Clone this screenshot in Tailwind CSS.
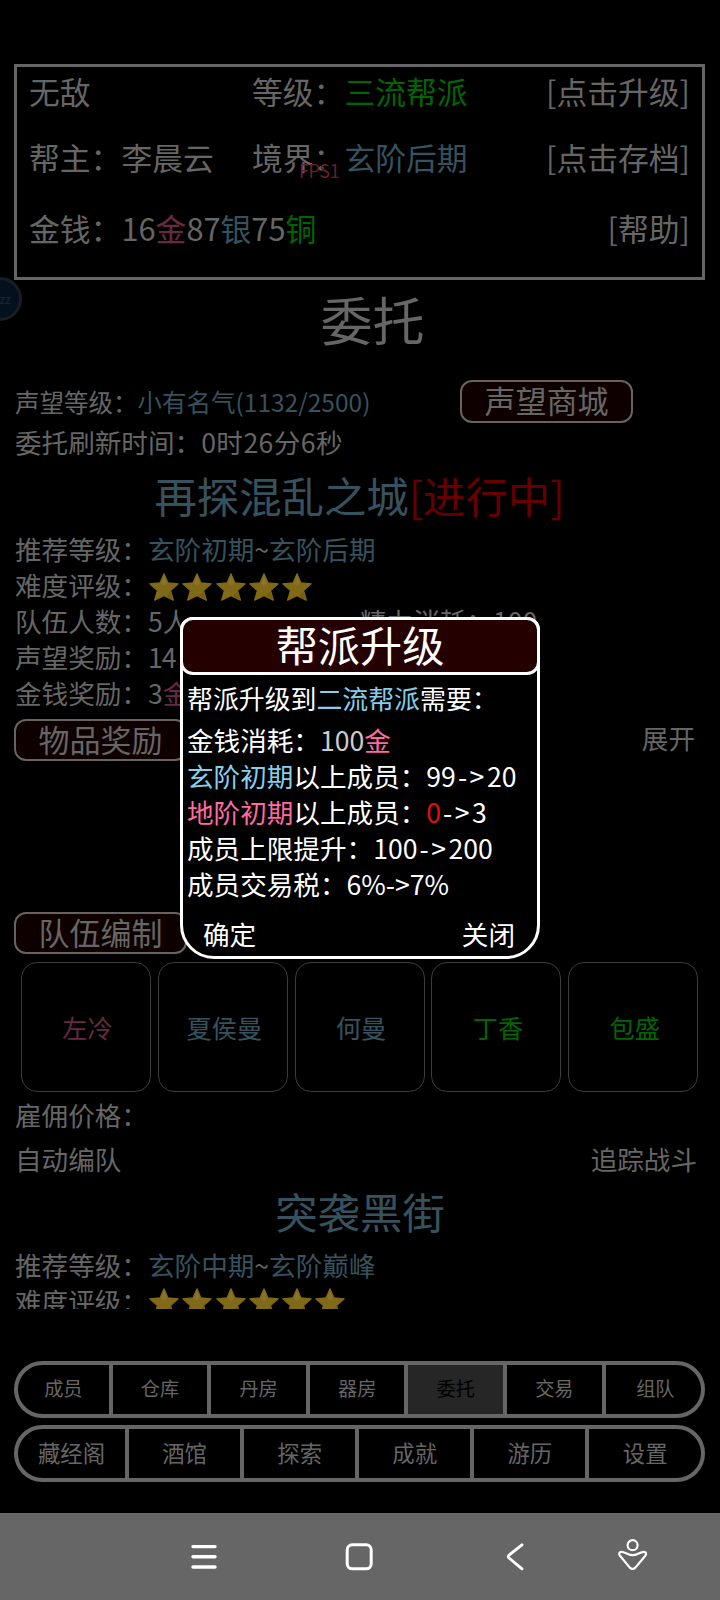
<!DOCTYPE html>
<html lang="zh-CN">
<head>
<meta charset="utf-8">
<title>帮派</title>
<script src="https://cdn.jsdelivr.net/npm/@tailwindcss/browser@4"></script>
</head>
<body class="bg-black">
<svg width="0" height="0" class="absolute">
  <defs>
    <symbol id="star" viewBox="0 0 30 28">
      <path d="M15 .8 18.9 9.8 29.2 10.8 21.6 17.6 24.4 27.2 15 22.6 5.6 27.2 8.4 17.6 .8 10.8 11.1 9.8z" fill="#806a17" stroke="#806a17" stroke-width="1.2" stroke-linejoin="round"/>
      <path d="M15 2 18 10.4 15 12.5 12 10.4z" fill="#89742b"/>
      <path d="M21.6 18.4 24 26.8 17 23z" fill="#73600f"/>
    </symbol>
  </defs>
</svg>
<div class="relative flex h-[1600px] w-[720px] flex-col overflow-hidden bg-black font-['Noto_Sans_CJK_SC',sans-serif] text-[26.6px] leading-none whitespace-nowrap text-[#666]">

  <header class="mr-[15px] ml-[14px] mt-16 flex h-[216px] shrink-0 flex-col border-3 border-[#666] pt-[1px] pr-[12px] pl-[12px] text-[30.8px]">
    <div class="flex h-[46.6px] items-center">
      <span class="w-[223px]">无敌</span>
      <span>等级：<span class="text-[#006600]">三流帮派</span></span>
      <span class="ml-auto">[点击升级]</span>
    </div>
    <div class="flex h-[84.8px] items-center">
      <span class="w-[223px]">帮主：李晨云</span>
      <span>境界：<span class="text-[#36525e]">玄阶后期</span></span>
      <span class="ml-auto">[点击存档]</span>
    </div>
    <div class="flex h-[58.4px] items-center">
      <span>金钱：16<span class="text-[#662a44]">金</span>87<span class="text-[#36525e]">银</span>75<span class="text-[#006600]">铜</span></span>
      <span class="ml-auto">[帮助]</span>
    </div>
  </header>

  <main class="flex h-[1029px] shrink-0 flex-col overflow-hidden pr-[14px] pl-[15px]">
    <h1 class="flex h-[78px] shrink-0 items-center justify-center pl-[26px] text-[52px]"><span class="w-[130px] pl-[12px]">委托</span></h1>
    <div class="mt-[18px] flex h-[52px] shrink-0 items-center text-[24.5px]">
      <span class="w-[445px]">声望等级：<span class="text-[#36525e]">小有名气(1132/2500)</span></span>
      <span class="-mt-[2px] flex h-[43px] w-[173px] items-center justify-center rounded-[12px] border-2 border-[#6a6262] bg-[#0f0000] pb-[4px] text-[31px]">声望商城</span>
    </div>
    <div class="flex h-[29px] shrink-0 items-center">委托刷新时间：<span class="tracking-[0.45px]">0时26分6秒</span></div>
    <h2 class="-ml-[2px] flex h-[74.5px] shrink-0 items-center justify-center pt-[2px] text-[42.4px] text-[#36525e]">再探混乱之城<span class="text-[#660000]">[进行中]</span></h2>
    <div class="flex h-9 shrink-0 items-center">推荐等级：<span class="text-[#36525e]">玄阶初期</span>~<span class="text-[#36525e]">玄阶后期</span></div>
    <div class="flex h-9 shrink-0 items-center">难度评级：
      <span class="mt-[2px] ml-[1px] flex gap-[3.3px]">
        <svg class="h-7 w-[30px]"><use href="#star"/></svg><svg class="h-7 w-[30px]"><use href="#star"/></svg><svg class="h-7 w-[30px]"><use href="#star"/></svg><svg class="h-7 w-[30px]"><use href="#star"/></svg><svg class="h-7 w-[30px]"><use href="#star"/></svg>
      </span>
    </div>
    <div class="flex h-9 shrink-0 items-center"><span class="w-[345px]">队伍人数：5人</span><span>精力消耗：100</span></div>
    <div class="flex h-9 shrink-0 items-center">声望奖励：<span class="tracking-[-1px]">14</span></div>
    <div class="flex h-9 shrink-0 items-center">金钱奖励：3<span class="text-[#662a44]">金</span></div>
    <div class="mt-[7.5px] -ml-px flex h-[42px] shrink-0 items-center justify-between pr-[11px]">
      <span class="flex h-full w-[173px] items-center justify-center rounded-[12px] border-2 border-[#6a6262] bg-[#0f0000] pb-[4px] text-[31px]">物品奖励</span>
      <span class="pb-[3px]">展开</span>
    </div>
    <div class="mt-[151px] -ml-px flex h-[42px] shrink-0 items-center">
      <span class="flex h-full w-[173px] items-center justify-center rounded-[12px] border-2 border-[#6a6262] bg-[#0f0000] pb-[4px] text-[31px]">队伍编制</span>
    </div>
    <div class="mt-2 ml-[6px] flex shrink-0 gap-[6.8px] text-[25.2px]">
      <span class="flex size-[130px] items-center justify-center rounded-[16px] border border-[#3c3c3c] pt-[2px] pl-[3px] text-[#662a44]">左冷</span>
      <span class="flex size-[130px] items-center justify-center rounded-[16px] border border-[#3c3c3c] pt-[2px] pl-[3px] text-[#36525e]">夏侯曼</span>
      <span class="flex size-[130px] items-center justify-center rounded-[16px] border border-[#3c3c3c] pt-[2px] pl-[3px] text-[#36525e]">何曼</span>
      <span class="flex size-[130px] items-center justify-center rounded-[16px] border border-[#3c3c3c] pt-[2px] pl-[3px] text-[#006600]">丁香</span>
      <span class="flex size-[130px] items-center justify-center rounded-[16px] border border-[#3c3c3c] pt-[2px] pl-[3px] text-[#006600]">包盛</span>
    </div>
    <div class="flex h-[47px] shrink-0 items-center">雇佣价格：</div>
    <div class="flex h-[40px] shrink-0 items-center justify-between pr-[9px]"><span>自动编队</span><span>追踪战斗</span></div>
    <h2 class="mb-1 -ml-px flex h-[64px] shrink-0 items-center justify-center text-[42.4px] text-[#36525e]">突袭黑街</h2>
    <div class="flex h-9 shrink-0 items-center">推荐等级：<span class="text-[#36525e]">玄阶中期</span>~<span class="text-[#36525e]">玄阶巅峰</span></div>
    <div class="flex h-9 shrink-0 items-center">难度评级：
      <span class="mt-[2px] ml-[1px] flex gap-[3.3px]">
        <svg class="h-7 w-[30px]"><use href="#star"/></svg><svg class="h-7 w-[30px]"><use href="#star"/></svg><svg class="h-7 w-[30px]"><use href="#star"/></svg><svg class="h-7 w-[30px]"><use href="#star"/></svg><svg class="h-7 w-[30px]"><use href="#star"/></svg><svg class="h-7 w-[30px]"><use href="#star"/></svg>
      </span>
    </div>
  </main>

  <nav class="mr-[15px] ml-[14px] mt-[52px] flex shrink-0 flex-col gap-[7px]">
    <div class="grid h-[57px] grid-cols-[94.7px_repeat(5,98.6px)_1fr] divide-x-4 divide-[#666] overflow-hidden rounded-full border-4 border-[#666] text-[19.2px]">
      <span class="flex items-center justify-center pb-[1px]">成员</span>
      <span class="flex items-center justify-center pb-[1px]">仓库</span>
      <span class="flex items-center justify-center pb-[1px]">丹房</span>
      <span class="flex items-center justify-center pb-[1px]">器房</span>
      <span class="flex items-center justify-center bg-[#262626] pb-[1px] text-black">委托</span>
      <span class="flex items-center justify-center pb-[1px]">交易</span>
      <span class="flex items-center justify-center pb-[1px] pl-[4px]">组队</span>
    </div>
    <div class="grid h-[57px] grid-cols-[111px_repeat(4,115.1px)_1fr] divide-x-4 divide-[#666] overflow-hidden rounded-full border-4 border-[#666] text-[22.4px]">
      <span class="flex items-center justify-center pb-[3px]">藏经阁</span>
      <span class="flex items-center justify-center pb-[3px]">酒馆</span>
      <span class="flex items-center justify-center pb-[3px]">探索</span>
      <span class="flex items-center justify-center pb-[3px]">成就</span>
      <span class="flex items-center justify-center pb-[3px]">游历</span>
      <span class="flex items-center justify-center pb-[3px]">设置</span>
    </div>
  </nav>

  <footer class="mt-auto flex h-[87px] shrink-0 items-center bg-[#666] pl-[189px]">
    <svg class="h-[30px] w-[30px]" viewBox="0 0 30 30" fill="none" stroke="#fff" stroke-width="3.4" stroke-linecap="round"><path d="M4 4.6h22M4 14.8h22M4 25h22"/></svg>
    <svg class="ml-[125px] h-[30px] w-[30px]" viewBox="0 0 30 30" fill="none" stroke="#fff" stroke-width="3"><rect x="3.2" y="2.8" width="24" height="24" rx="5"/></svg>
    <svg class="ml-[126px] h-[30px] w-[30px]" viewBox="0 0 30 30" fill="none" stroke="#fff" stroke-width="2.9" stroke-linecap="round" stroke-linejoin="round"><path d="M22 2.8 9 13.2Q7.4 14.6 9 16L22 26.8"/></svg>
    <svg class="mb-[3px] ml-[86px] h-[34px] w-[34px]" viewBox="0 0 34 34" fill="none" stroke="#fff" stroke-width="2.2" stroke-linejoin="round"><circle cx="16.6" cy="7.2" r="5"/><path d="M16.6 17.2C12.5 17.2 9 13.8 5.5 13.8 3 13.8 2.6 16 4 17.8L13.8 29.6Q16.6 32 19.4 29.6L29.3 17.8C30.7 16 30.3 13.8 27.8 13.8 24.2 13.8 20.8 17.2 16.6 17.2z"/></svg>
  </footer>

  <span class="absolute top-[161px] left-[299px] text-[18px] tracking-[-0.4px] text-[#66222a]">FPS1</span>
  <span class="absolute top-[277px] left-[-22px] flex size-11 items-center justify-end rounded-full border-[3px] border-[#191e24] bg-[#05101f] pr-[8px] text-[12px] text-[#20262d]">zz</span>

  <section class="absolute top-[617px] left-[180px] flex h-[342px] w-[360px] flex-col rounded-t-[13px] rounded-b-[34px] border-[3.5px] border-white bg-black text-white">
    <h2 class="-mx-[3px] -mt-[3px] flex h-[58px] shrink-0 items-center justify-center rounded-[13px] border-[3px] border-white bg-[#250000] pb-[4px] text-[42.2px]">帮派升级</h2>
    <div class="mt-[9px] flex h-[28px] items-center pl-[4px] text-[25.9px]">帮派升级到<span class="text-[#87ceeb]">二流帮派</span>需要：</div>
    <div class="mt-[10px] flex h-9 items-center pl-[4px]">金钱消耗：<span class="text-[#ccc]">100</span><span class="text-[#ff69a0]">金</span></div>
    <div class="flex h-9 items-center pl-[4px]"><span class="text-[#87ceeb]">玄阶初期</span>以上成员：99<span class="pl-[2px] tracking-[2.5px]">-&gt;</span>20</div>
    <div class="flex h-9 items-center pl-[4px]"><span class="text-[#ff69a0]">地阶初期</span>以上成员：<span class="text-[#e01010]">0</span><span class="pl-[2px] tracking-[2.5px]">-&gt;</span>3</div>
    <div class="flex h-9 items-center pl-[4px]">成员上限提升：100<span class="pl-[2px] tracking-[2.5px]">-&gt;</span>200</div>
    <div class="flex h-9 items-center pl-[4px]">成员交易税：6%-&gt;7%</div>
    <div class="mt-[18px] flex h-[28px] items-center justify-between pr-[22px] pl-[20px]"><span>确定</span><span>关闭</span></div>
  </section>
</div>
</body>
</html>
